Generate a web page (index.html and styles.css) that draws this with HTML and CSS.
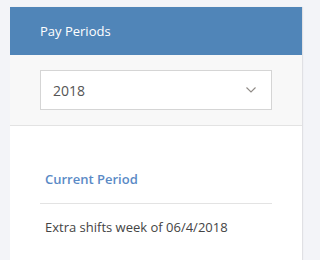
FILE: index.html
```html
<!DOCTYPE html>
<html>
<head>
<meta charset="utf-8">
<link rel="stylesheet" href="styles.css">
</head>
<body>
<div class="card">
  <div class="card-header">Pay Periods</div>
  <div class="card-filter">
    <div class="select">
      <span class="select-value">2018</span>
      <svg class="chevron" width="10" height="6" viewBox="0 0 10 6"><path d="M0.5 0.5 L5 5 L9.5 0.5" fill="none" stroke="#8f8a86" stroke-width="1.1"/></svg>
    </div>
  </div>
  <div class="card-body">
    <div class="section-title">Current Period</div>
    <div class="period">Extra shifts week of 06/4/2018</div>
  </div>
</div>
</body>
</html>
```
FILE: styles.css
```css
html, body {
  margin: 0;
  padding: 0;
  background: #f3f4f8;
  font-family: "Open Sans", "Liberation Sans", sans-serif;
}
body {
  padding: 7px 0 0 10px;
  height: 260px;
  box-sizing: border-box;
  overflow: hidden;
}
.card {
  width: 292px;
  height: 253px;
  background: #fff;
  box-shadow: 1px 0 1px rgba(0, 0, 0, 0.08);
}
.card-header {
  height: 48px;
  background: #5085b8;
  color: #fff;
  font-size: 13px;
  line-height: 48px;
  padding-left: 30px;
}
.card-filter {
  background: #f8f8f8;
  padding: 15px 30px;
  border-bottom: 1px solid #e3e3e3;
}
.select {
  height: 40px;
  box-sizing: border-box;
  border: 1px solid #d5d5d5;
  background: #fff;
  display: flex;
  align-items: center;
  justify-content: space-between;
  padding: 0 15px 0 12px;
}
.select-value {
  font-size: 14px;
  color: #555;
}
.chevron {
  display: block;
}
.card-body {
  padding: 43px 30px 0;
}
.section-title {
  font-size: 13px;
  line-height: 20px;
  font-weight: 600;
  color: #5a8ac6;
  padding: 0 5px 14px;
  border-bottom: 1px solid #e3e3e3;
}
.period {
  font-size: 13px;
  line-height: 20px;
  color: #444;
  padding: 13px 5px 0;
}
```
